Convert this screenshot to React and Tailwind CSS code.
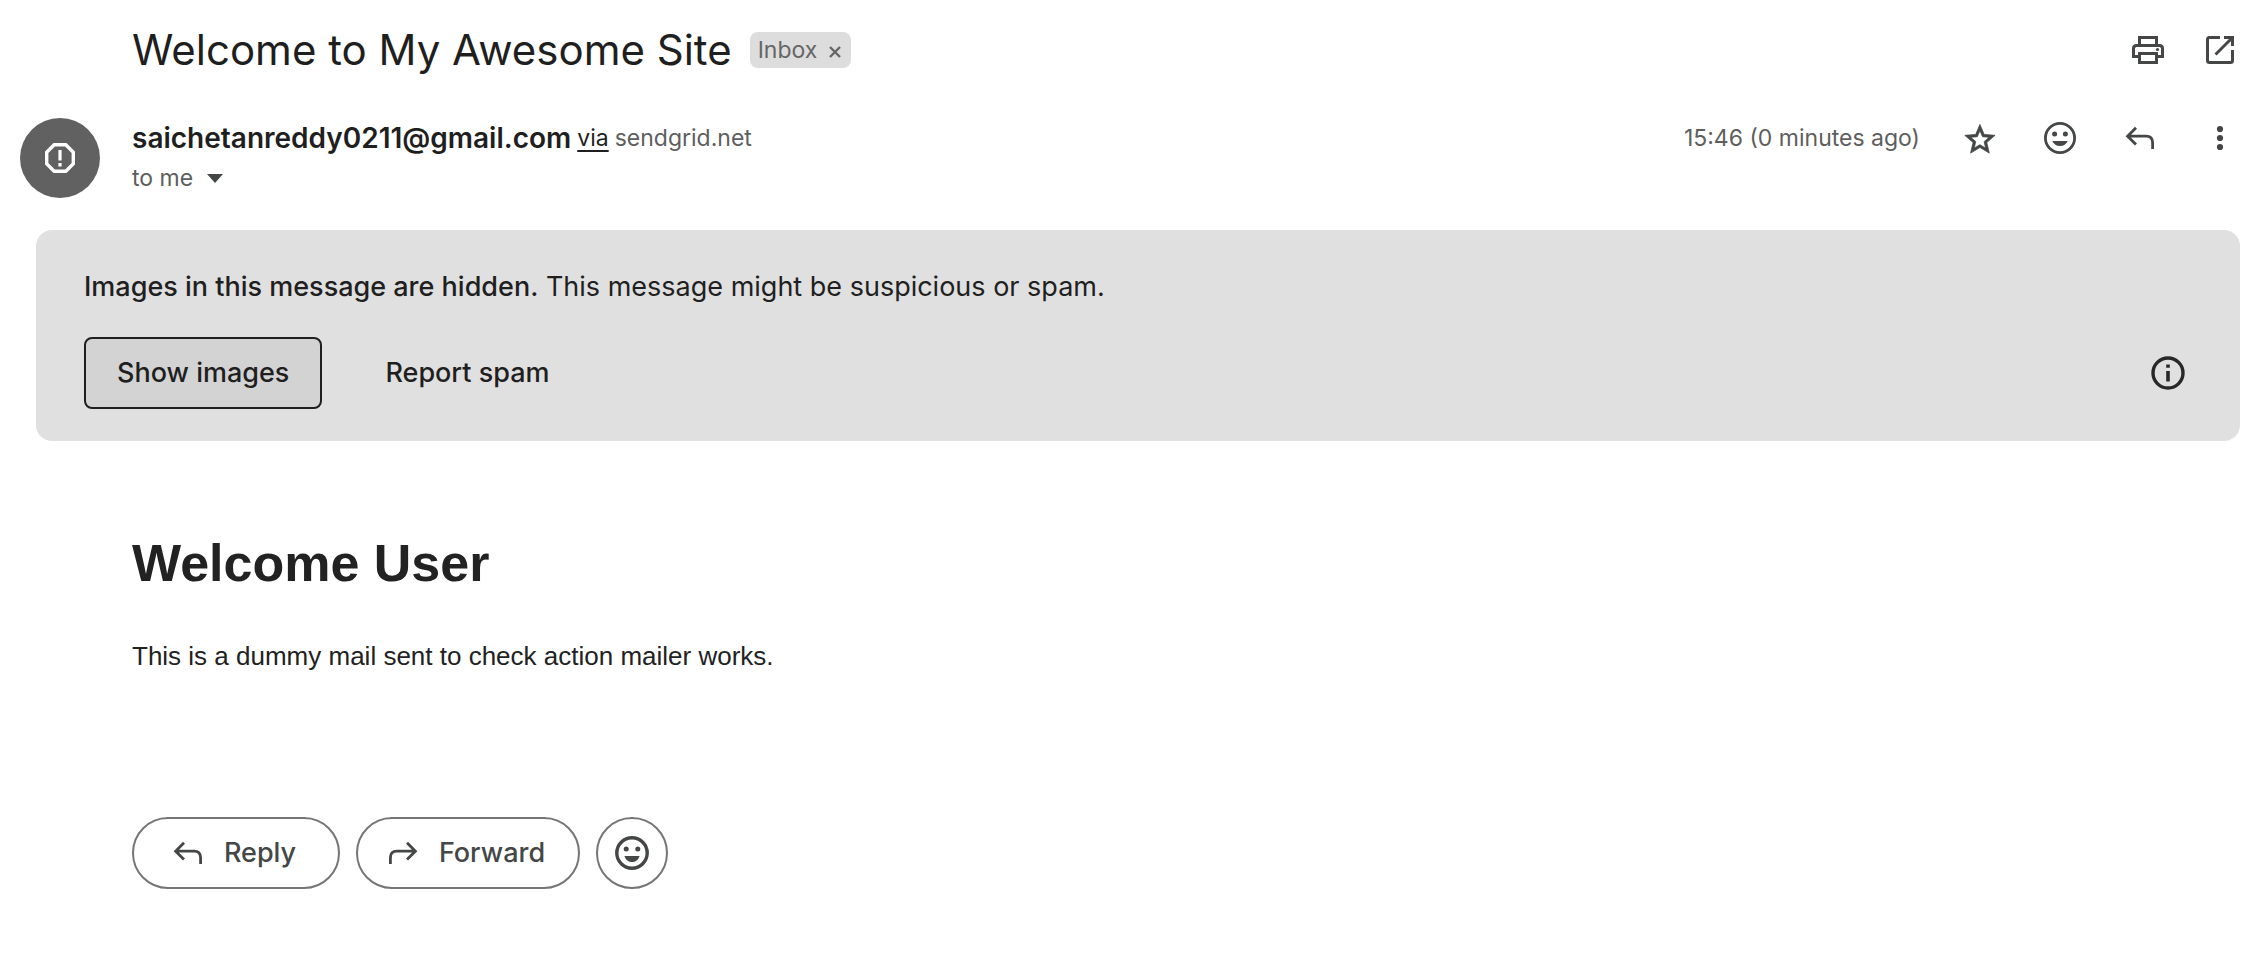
const iconBox = "size-10 shrink-0";

function Icon({ children, className = "text-[#444746]" }) {
  return (
    <svg viewBox="0 0 40 40" className={`${iconBox} ${className}`} fill="none" stroke="currentColor" aria-hidden="true">
      {children}
    </svg>
  );
}

function PrintIcon() {
  return (
    <Icon>
      <path strokeWidth="3" d="M11.5 15V7.500h17V15M11.500 26.500H5.500V18.500q0-3 3-3h23q3 0 3 3v8h-6" />
      <path strokeWidth="3" d="M11.500 23.500h17v9h-17z" />
      <circle cx="29.500" cy="19.500" r="1.600" fill="currentColor" stroke="none" />
    </Icon>
  );
}

function OpenIcon() {
  return (
    <Icon>
      <path strokeWidth="3" d="M20 7.500H9.500q-2 0-2 2v21q0 2 2 2h21q2 0 2-2V20" />
      <path strokeWidth="3" d="M24 7.500h8.500V16M32 8L15.500 24.500" />
    </Icon>
  );
}

function StarIcon() {
  return (
    <Icon>
      <path
        fill="currentColor"
        strokeWidth="0.500"
        transform="translate(1.800 3.400) scale(1.510)"
        d="M22 9.240l-7.190-.620L12 2 9.190 8.630 2 9.240l5.460 4.730L5.820 21 12 17.270 18.180 21l-1.630-7.030L22 9.240zM12 15.400l-3.760 2.270 1-4.280-3.320-2.880 4.380-.380L12 6.100l1.710 4.040 4.380.380-3.320 2.880 1 4.280L12 15.400z"
      />
    </Icon>
  );
}

function SmileIcon() {
  return (
    <Icon>
      <circle cx="20" cy="20" r="14.600" strokeWidth="2.800" />
      <g fill="currentColor" stroke="none">
        <circle cx="14.600" cy="16" r="2.500" />
        <circle cx="25.400" cy="16" r="2.500" />
        <path d="M12.300 23h15.400q-2.200 5-7.700 5t-7.700-5z" />
      </g>
    </Icon>
  );
}

function BoldSmileIcon() {
  return (
    <Icon>
      <circle cx="20" cy="20" r="15.200" strokeWidth="3.400" />
      <g fill="currentColor" stroke="none">
        <circle cx="14.200" cy="16" r="2.500" />
        <circle cx="25.800" cy="16" r="2.500" />
        <path d="M12.300 23h15.400q-2.200 6-7.700 6t-7.700-6z" />
      </g>
    </Icon>
  );
}

function ReplyIcon() {
  return (
    <Icon>
      <path strokeWidth="2.800" d="M16 9.800L7.600 18.200 16 26.600M8 18.200h18q6.600 0 6.600 6.600V31" />
    </Icon>
  );
}

function ForwardIcon() {
  return (
    <Icon>
      <path strokeWidth="2.800" d="M24 9.800L32.400 18.200 24 26.600M32 18.200H14q-6.600 0-6.600 6.600V31" />
    </Icon>
  );
}

function MoreIcon() {
  return (
    <Icon>
      <g fill="currentColor" stroke="none">
        <circle cx="20" cy="11" r="3.100" />
        <circle cx="20" cy="20" r="3.100" />
        <circle cx="20" cy="29" r="3.100" />
      </g>
    </Icon>
  );
}

function InfoIcon() {
  return (
    <Icon className="text-[#282828]">
      <circle cx="20" cy="20" r="15" strokeWidth="3.400" />
      <path strokeWidth="3.600" d="M20 11.500v3.200M20 18v10.500" />
    </Icon>
  );
}

function IconButton({ label, children }) {
  return (
    <button type="button" aria-label={label} className="size-10 shrink-0">
      {children}
    </button>
  );
}

const pill = "flex h-[72px] items-center justify-center rounded-full border-2 border-[#747775]";

export default function App() {
  return (
    <main className="bg-white pb-16 font-['Inter',sans-serif] text-[23px] text-[#5e5e5e]">
      <header className="flex h-[100px] items-center justify-between pr-4 pl-[132px]">
        <div className="flex items-center gap-[18px]">
          <h1 className="text-[42px] leading-[56px] text-[#1f1f1f]">Welcome to My Awesome Site</h1>
          <div className="flex h-9 items-center gap-3 rounded-lg bg-[#dddddd] pr-2.5 pl-2 text-[#666666]">
            <span>Inbox</span>
            <button type="button" aria-label="Remove label Inbox">
              <svg viewBox="0 0 12 12" className="mt-1 size-3" stroke="currentColor" strokeWidth="2.400" aria-hidden="true">
                <path d="M1 1l10 10M11 1L1 11" />
              </svg>
            </button>
          </div>
        </div>
        <div className="flex gap-8">
          <IconButton label="Print all"><PrintIcon /></IconButton>
          <IconButton label="In new window"><OpenIcon /></IconButton>
        </div>
      </header>

      <section className="mt-[18px] flex items-start gap-8 pr-4 pl-5">
        <div className="flex size-20 shrink-0 items-center justify-center rounded-full bg-[#616161]">
          <Icon className="text-white">
            <path strokeWidth="3.400" d="M14.200 6.700h11.600l7.500 7.500v11.600l-7.500 7.500H14.200l-7.500-7.500V14.200z" />
            <path strokeWidth="3.200" d="M20 12v10.500M20 25v3.400" />
          </Icon>
        </div>
        <div className="grow leading-10">
          <p className="flex items-center gap-1.5">
            <span className="text-[28px] font-semibold text-[#1f1f1f]">saichetanreddy0211@gmail.com</span>
            <a href="#via" className="text-[#1f1f1f] underline decoration-2 underline-offset-4">via</a>
            <span>sendgrid.net</span>
          </p>
          <button type="button" aria-label="Show details" className="flex items-center gap-3.5">
            to me
            <svg viewBox="0 0 16 9" className="h-[9px] w-4" fill="#444746" aria-hidden="true">
              <path d="M0 0h16L8 9z" />
            </svg>
          </button>
        </div>
        <div className="flex items-center gap-10">
          <time className="leading-10">15:46 (0 minutes ago)</time>
          <IconButton label="Star"><StarIcon /></IconButton>
          <IconButton label="Add reaction"><SmileIcon /></IconButton>
          <IconButton label="Reply"><ReplyIcon /></IconButton>
          <IconButton label="More"><MoreIcon /></IconButton>
        </div>
      </section>

      <section className="mt-8 mr-4 ml-9 rounded-2xl bg-[#e0e0e0] px-12 pt-[37px] pb-8 text-[27px] text-[#1f1f1f]">
        <p className="leading-10">
          <strong className="font-medium">Images in this message are hidden.</strong> This message might be suspicious or spam.
        </p>
        <div className="mt-[30px] flex items-center">
          <button type="button" className="h-[72px] rounded-lg border-2 border-[#1f1f1f] bg-[#d3d3d3] px-[31px] font-medium">
            Show images
          </button>
          <button type="button" className="ml-8 h-[72px] px-[31px] font-medium">Report spam</button>
          <div className="mr-1 ml-auto flex">
            <IconButton label="Why is this message suspicious?"><InfoIcon /></IconButton>
          </div>
        </div>
      </section>

      <article className="mt-[92px] px-[132px] font-['Liberation_Sans',Arial,sans-serif] text-[#222222]">
        <h2 className="text-[52px] leading-[60px] font-bold">Welcome User</h2>
        <p className="mt-[43px] text-[26px] leading-10">This is a dummy mail sent to check action mailer works.</p>
      </article>

      <footer className="mt-[141px] flex gap-4 pl-[132px] text-[27px] font-medium text-[#444746]">
        <button type="button" className={`${pill} w-52 gap-4 pr-2`}>
          <ReplyIcon />
          Reply
        </button>
        <button type="button" className={`${pill} w-56 gap-4 pr-2`}>
          <ForwardIcon />
          Forward
        </button>
        <button type="button" aria-label="Add reaction" className={`${pill} w-[72px]`}>
          <BoldSmileIcon />
        </button>
      </footer>
    </main>
  );
}
